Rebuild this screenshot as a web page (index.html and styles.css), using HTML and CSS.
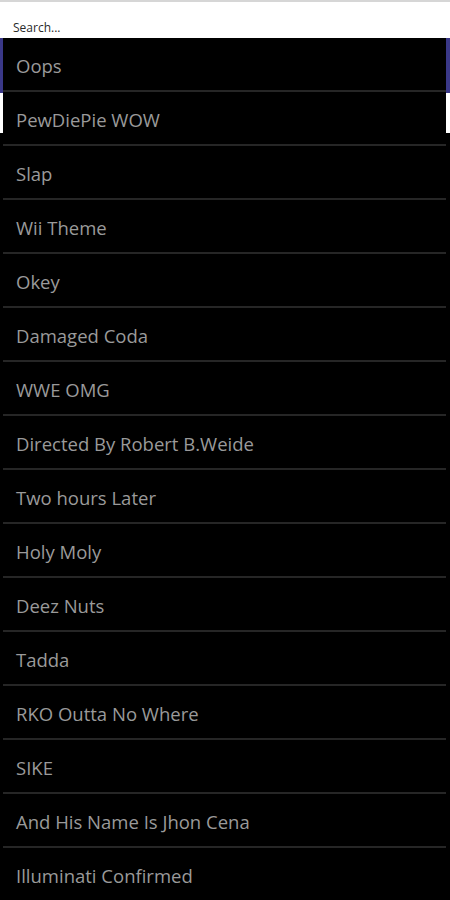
FILE: index.html
```html
<!DOCTYPE html>
<html lang="en">
<head>
    <meta charset="UTF-8">
    <meta name="viewport" content="width=device-width, initial-scale=1.0">
    <title>Soundboard</title>
    <link rel="stylesheet" href="styles.css">
</head>
<body>

<!-- Page behind the dropdown -->
<div class="page">
    <div class="page-top"></div>
    <div class="page-band"></div>
    <div class="page-strip"></div>
</div>

<!-- Search dropdown -->
<div class="dropdown">
    <input type="text" class="search-input" placeholder="Search...">
    <ul class="sound-list">
        <li>Oops</li>
        <li>PewDiePie WOW</li>
        <li>Slap</li>
        <li>Wii Theme</li>
        <li>Okey</li>
        <li>Damaged Coda</li>
        <li>WWE OMG</li>
        <li>Directed By Robert B.Weide</li>
        <li>Two hours Later</li>
        <li>Holy Moly</li>
        <li>Deez Nuts</li>
        <li>Tadda</li>
        <li>RKO Outta No Where</li>
        <li>SIKE</li>
        <li>And His Name Is Jhon Cena</li>
        <li>Illuminati Confirmed</li>
    </ul>
</div>

</body>
</html>
```

FILE: styles.css
```css
/* Soundboard search overlay */
html, body {
    margin: 0;
    padding: 0;
    height: 100%;
    overflow: hidden;
    background-color: #000;
    font-family: "Open Sans", "Noto Sans", sans-serif;
}

.page {
    display: flex;
    flex-direction: column;
}

.page-top {
    height: 36px;
    background-color: #fff;
    border-top: 2px solid #d6d6d6;
}

.page-band {
    height: 55px;
    background-color: #3a3888;
}

.page-strip {
    height: 40px;
    background-color: #fff;
}

.dropdown {
    position: absolute;
    top: 2px;
    left: 0;
    right: 4px;
    display: flex;
    flex-direction: column;
}

.search-input {
    box-sizing: border-box;
    height: 36px;
    margin: 0;
    padding: 14px 0 0 13px;
    border: none;
    outline: none;
    background-color: #fff;
    font-family: "Open Sans", "Noto Sans", sans-serif;
    font-size: 12px;
    color: #222;
}

.search-input::placeholder {
    color: #2a2a2a;
    opacity: 1;
}

.sound-list {
    list-style: none;
    margin: 0 0 0 3px;
    padding: 0;
    background-color: #000;
}

.sound-list li {
    box-sizing: border-box;
    height: 54px;
    padding: 3px 0 0 13px;
    display: flex;
    align-items: center;
    font-size: 18.5px;
    color: #9a9a9a;
    border-bottom: 2px solid #262626;
}
```
